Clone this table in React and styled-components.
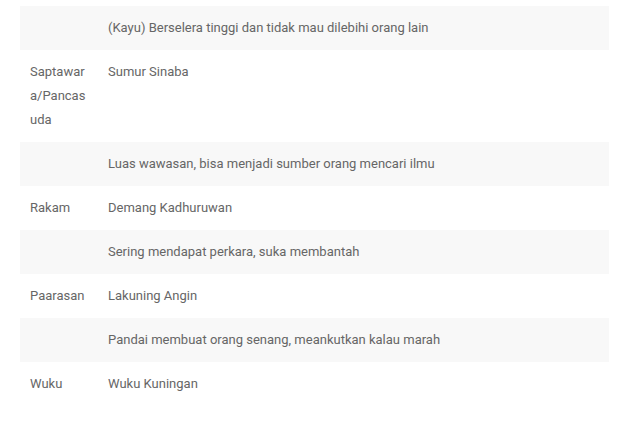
import React from "react";
import styled, { createGlobalStyle } from "styled-components";

const Global = createGlobalStyle`
  html, body { margin: 0; padding: 0; background: #fff; }
  body { font-family: Roboto, "Liberation Sans", sans-serif; }
`;

const Page = styled.div`
  padding: 6px 11px 0 20px;
`;

const Table = styled.table`
  width: 589px;
  border-collapse: collapse;
  table-layout: fixed;
  font-size: 13px;
  line-height: 24px;
  color: #666;
`;

const Row = styled.tr`
  background: ${(p) => (p.$shaded ? "#f8f8f8" : "transparent")};
`;

const Label = styled.td`
  width: 58px;
  padding: 10px;
  vertical-align: top;
  overflow-wrap: anywhere;
  word-break: break-all;
`;

const Value = styled.td`
  padding: 10px;
  vertical-align: top;
`;

const rows = [
  ["", "(Kayu) Berselera tinggi dan tidak mau dilebihi orang lain"],
  ["Saptawara/Pancasuda", "Sumur Sinaba"],
  ["", "Luas wawasan, bisa menjadi sumber orang mencari ilmu"],
  ["Rakam", "Demang Kadhuruwan"],
  ["", "Sering mendapat perkara, suka membantah"],
  ["Paarasan", "Lakuning Angin"],
  ["", "Pandai membuat orang senang, meankutkan kalau marah"],
  ["Wuku", "Wuku Kuningan"],
];

export default function App() {
  return (
    <Page>
      <Global />
      <Table>
        <tbody>
          {rows.map(([l, v], i) => (
            <Row key={i} $shaded={i % 2 === 0}>
              <Label>{l}</Label>
              <Value>{v}</Value>
            </Row>
          ))}
        </tbody>
      </Table>
    </Page>
  );
}
